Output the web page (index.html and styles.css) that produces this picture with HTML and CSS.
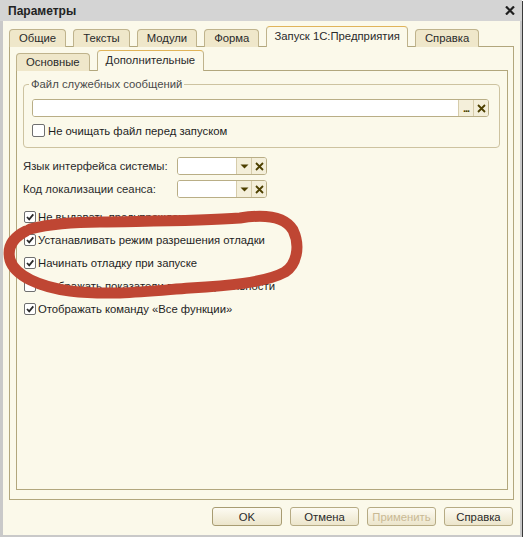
FILE: index.html
```html
<!DOCTYPE html>
<html lang="ru">
<head>
<meta charset="utf-8">
<title>Параметры</title>
<link rel="stylesheet" href="styles.css">
</head>
<body>
<div class="window">
  <div class="titlebar">
    <span class="title">Параметры</span>
    <svg class="close" width="10" height="9" viewBox="0 0 10 9"><path d="M1 0.5 L9 8.5 M9 0.5 L1 8.5" stroke="#1e1e1e" stroke-width="2.2"/></svg>
  </div>
  <div class="content">
    <div class="tabs">
      <div class="tab">Общие</div>
      <div class="tab">Тексты</div>
      <div class="tab">Модули</div>
      <div class="tab">Форма</div>
      <div class="tab active">Запуск 1С:Предприятия</div>
      <div class="tab">Справка</div>
    </div>
    <div class="panel">
      <div class="tabs inner-tabs">
        <div class="tab">Основные</div>
        <div class="tab active">Дополнительные</div>
      </div>
      <div class="panel inner-panel">
        <fieldset class="group">
          <legend>Файл служебных сообщений</legend>
          <div class="input wide">
            <div class="input-text"></div>
            <div class="ibtn dots">...</div>
            <div class="ibtn"><svg width="9" height="9" viewBox="0 0 9 9"><path d="M1 1 L8 8 M8 1 L1 8" stroke="#4d4000" stroke-width="1.8"/></svg></div>
          </div>
          <label class="check first"><span class="box"></span>Не очищать файл перед запуском</label>
        </fieldset>
        <div class="form">
          <span class="lbl">Язык интерфейса системы:</span>
          <div class="input small">
            <div class="input-text"></div>
            <div class="ibtn"><svg width="9" height="5" viewBox="0 0 9 5"><path d="M0.5 0.5 L8.5 0.5 L4.5 4.5 Z" fill="#4d4000"/></svg></div>
            <div class="ibtn"><svg width="9" height="9" viewBox="0 0 9 9"><path d="M1 1 L8 8 M8 1 L1 8" stroke="#4d4000" stroke-width="1.8"/></svg></div>
          </div>
          <span class="lbl">Код локализации сеанса:</span>
          <div class="input small">
            <div class="input-text"></div>
            <div class="ibtn"><svg width="9" height="5" viewBox="0 0 9 5"><path d="M0.5 0.5 L8.5 0.5 L4.5 4.5 Z" fill="#4d4000"/></svg></div>
            <div class="ibtn"><svg width="9" height="9" viewBox="0 0 9 9"><path d="M1 1 L8 8 M8 1 L1 8" stroke="#4d4000" stroke-width="1.8"/></svg></div>
          </div>
        </div>
        <div class="checks">
          <label class="check"><span class="box checked"><svg width="10" height="10" viewBox="0 0 10 10"><path d="M2 5 L4.2 7.3 L8.3 2.4" stroke="#2a2a2a" stroke-width="1.8" fill="none"/></svg></span>Не выдавать предупреждение при запуске</label>
          <label class="check"><span class="box checked"><svg width="10" height="10" viewBox="0 0 10 10"><path d="M2 5 L4.2 7.3 L8.3 2.4" stroke="#2a2a2a" stroke-width="1.8" fill="none"/></svg></span>Устанавливать режим разрешения отладки</label>
          <label class="check"><span class="box checked"><svg width="10" height="10" viewBox="0 0 10 10"><path d="M2 5 L4.2 7.3 L8.3 2.4" stroke="#2a2a2a" stroke-width="1.8" fill="none"/></svg></span>Начинать отладку при запуске</label>
          <label class="check"><span class="box"></span>Отображать показатели производительности</label>
          <label class="check"><span class="box checked"><svg width="10" height="10" viewBox="0 0 10 10"><path d="M2 5 L4.2 7.3 L8.3 2.4" stroke="#2a2a2a" stroke-width="1.8" fill="none"/></svg></span>Отображать команду «Все функции»</label>
        </div>
      </div>
    </div>
    <div class="buttons">
      <div class="btn ok">OK</div>
      <div class="btn">Отмена</div>
      <div class="btn disabled">Применить</div>
      <div class="btn">Справка</div>
    </div>
  </div>
  <svg class="scribble" width="523" height="538" viewBox="0 0 523 538">
    <path d="M 30 229 C 50 224, 70 222, 100 222 C 150 221, 200 221, 240 218 C 265 214, 285 217, 293 230 C 301 247, 296 265, 285 272 C 265 283, 225 286, 190 288 C 150 291, 110 296, 70 291 C 40 287, 15 276, 10 260 C 7 248, 12 238, 26 231" fill="none" stroke="#bf4633" stroke-width="11" stroke-linecap="round" stroke-linejoin="round"/>
  </svg>
</div>
</body>
</html>
```

FILE: styles.css
```css
* { box-sizing: border-box; }
html, body { margin: 0; padding: 0; }
body {
  font-family: "Liberation Sans", Arial, sans-serif;
  font-size: 11.3px;
  color: #1e1e1e;
  background: #ffffff;
}
.window {
  position: relative;
  width: 522px;
  height: 537px;
  background: #fbf9ea;
  border-left: 3px solid #c9c9c9;
  border-right: 2px solid #c9c9c9;
  border-bottom: 2px solid #c9c9c9;
  box-shadow: 1px 1px 0 #3a3a3a;
  display: flex;
  flex-direction: column;
}
.titlebar {
  height: 21px;
  background: #d4d4d4;
  display: flex;
  align-items: center;
  justify-content: space-between;
  margin-left: -3px;
  margin-right: -2px;
  padding: 0 5px 0 8px;
}
.title { font-weight: bold; font-size: 12px; color: #222; }
.close { margin-right: 2px; }
.content {
  flex: 1;
  display: flex;
  flex-direction: column;
  padding: 6px 6px 0 6px;
}
.tabs {
  display: flex;
  align-items: flex-end;
  gap: 7px;
  height: 20px;
  position: relative;
  z-index: 1;
  margin-bottom: -1px;
}
.tab {
  height: 18px;
  line-height: 17px;
  padding: 0 9px;
  background: #efe7ca;
  border: 1px solid #bfb38c;
  border-bottom: none;
  border-radius: 4px 4px 0 0;
  color: #2a2a2a;
}
.tab.active {
  height: 21px;
  line-height: 19px;
  background: #fbf9ea;
  border-top: 1px solid #e0b45a;
  padding: 0 7px;
}
.inner-tabs .tab { padding: 0 9px; }
.inner-tabs .tab.active { padding: 0 8px; }
.panel {
  flex: 1;
  border: 1px solid #b2a77d;
  display: flex;
  flex-direction: column;
  padding: 4px 5px 9px 6px;
}
.inner-tabs { height: 20px; }
.inner-panel {
  padding: 0 7px 0 6px;
}
.group {
  margin: 6px 0 0 0;
  padding: 0 10px 10px 8px;
  border: 1px solid #cdc3a0;
  border-radius: 4px;
}
.group legend {
  padding: 0 2px;
  margin-left: -3px;
  line-height: 14px;
  color: #4a4a4a;
}
.input {
  display: flex;
  height: 18px;
  border: 1px solid #b9ae86;
  border-radius: 3px;
  background: #fff;
  overflow: hidden;
}
.input.wide { margin-top: 8px; }
.input-text { flex: 1; background: #fff; }
.ibtn {
  width: 15px;
  background: #f4efda;
  border-left: 1px solid #d6ccab;
  display: flex;
  align-items: center;
  justify-content: center;
  color: #4d4000;
}
.ibtn.dots { font-size: 11px; line-height: 10px; align-items: flex-end; padding-bottom: 3px; font-weight: bold; letter-spacing: -1px; }
.check {
  display: flex;
  align-items: center;
  gap: 2px;
  height: 23px;
}
.check.first { height: 13px; margin-top: 7px; gap: 3px; }
.box {
  width: 12px;
  height: 12px;
  border: 1px solid #6f6f6f;
  border-radius: 2px;
  background: #fff;
  display: flex;
  align-items: center;
  justify-content: center;
}
.check.first .box { width: 13px; height: 13px; }
.form {
  display: grid;
  grid-template-columns: 154px 90px;
  row-gap: 5px;
  margin-top: 9px;
  align-items: center;
}
.lbl { color: #2a2a2a; }
.input.small { width: 90px; }
.checks {
  margin-top: 7px;
  padding-left: 1px;
  display: flex;
  flex-direction: column;
}
.buttons {
  display: flex;
  justify-content: flex-end;
  gap: 8px;
  padding: 7px 1px 0 0;
  height: 35px;
}
.btn {
  height: 19px;
  width: 69px;
  border: 1px solid #b6ab84;
  border-radius: 3px;
  background: linear-gradient(#fdfbf2, #ece5cb);
  display: flex;
  align-items: center;
  justify-content: center;
  color: #2a2a2a;
}
.btn.ok { width: 70px; border-color: #a89c72; }
.btn.disabled { color: #c9b994; }
.scribble {
  position: absolute;
  left: -3px;
  top: 0;
  pointer-events: none;
}
```
